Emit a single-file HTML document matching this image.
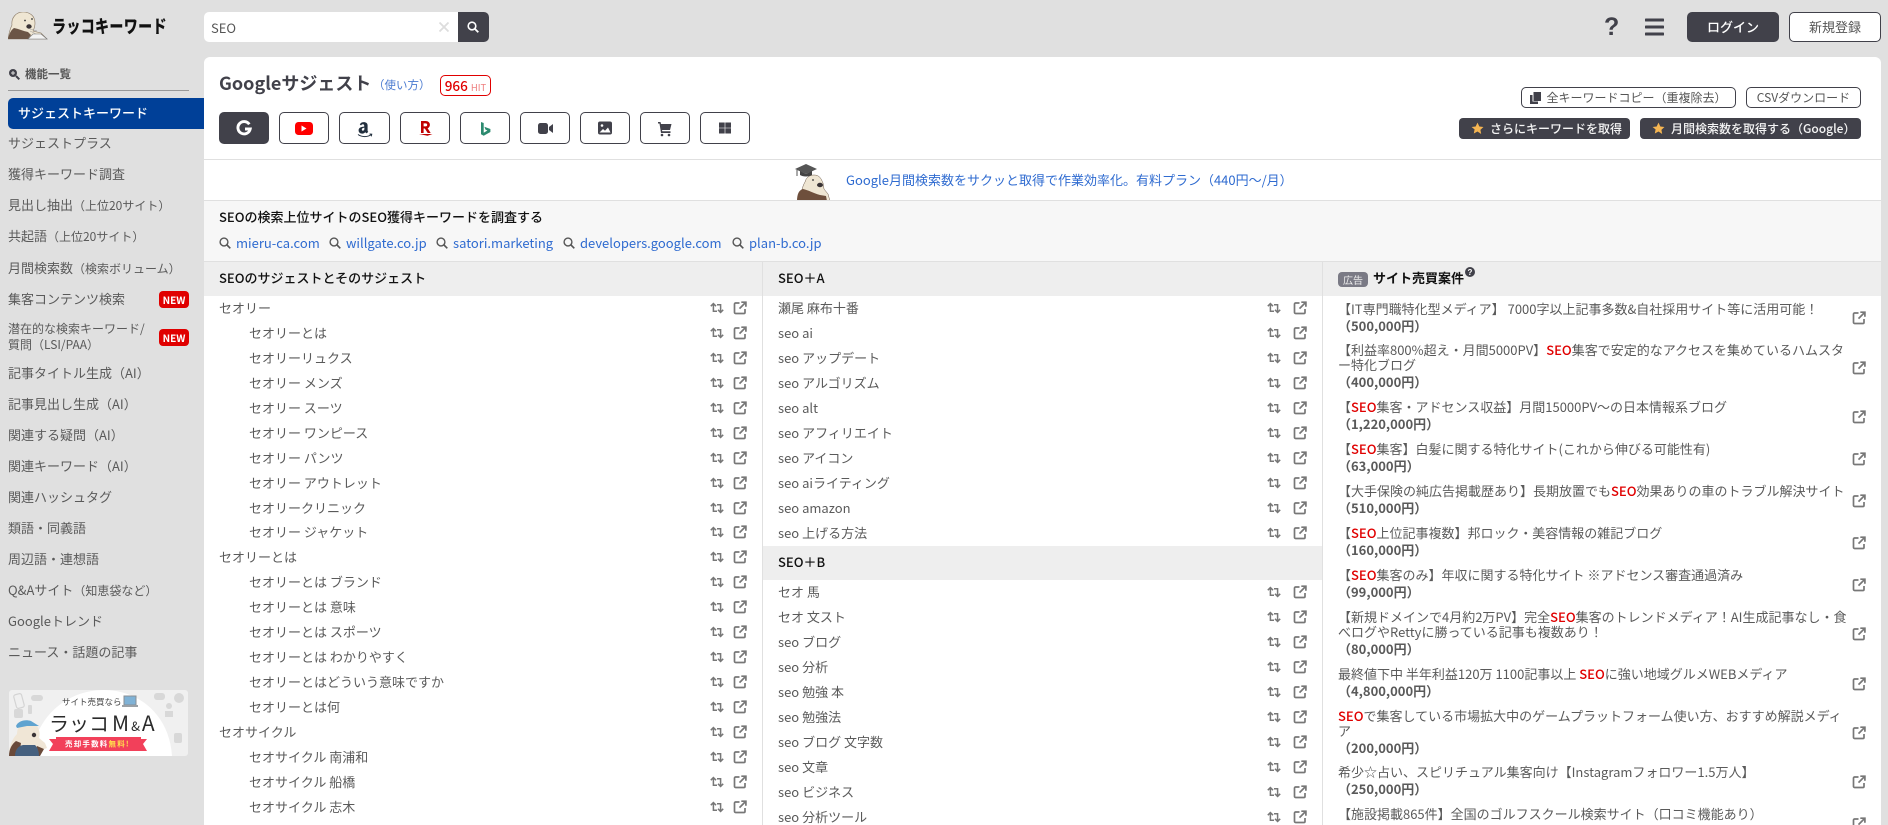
<!DOCTYPE html>
<html lang="ja"><head><meta charset="utf-8"><title>ラッコキーワード</title>
<style>
*{box-sizing:border-box}
html,body{margin:0;padding:0;width:1888px;height:825px;overflow:hidden;background:#e0e0e0}
body{position:relative;font-family:"Noto Sans CJK JP","Liberation Sans",sans-serif;font-size:13px;color:#555}
.a{position:absolute;white-space:nowrap}
.logo{left:52px;top:12px;font-size:18px;font-weight:900;color:#111;line-height:28px;transform:scaleX(.78);transform-origin:0 50%;letter-spacing:.4px}
.search{left:204px;top:12px;width:285px;height:30px;background:#fff;border-radius:5px;overflow:hidden}
.search span{position:absolute;left:7px;top:0;line-height:31px;color:#555}
.search i{position:absolute;left:254px;top:0;width:31px;height:30px;background:#41414a}
.side{left:8px;height:30px;line-height:30px;color:#5a5a5a}
.side small{font-size:12px}
.act{left:8px;top:98px;width:196px;height:31px;background:#004098;color:#fff;border-radius:5px 0 0 5px;line-height:29px;padding-left:10px;font-weight:500}
.new{left:159px;width:30px;height:17px;background:#e00000;color:#fff;border-radius:4px;font-size:10px;font-weight:700;line-height:17px;text-align:center}
.card{left:204px;top:57px;width:1677px;height:790px;background:#fff;border-radius:6px 6px 0 0}
.tb{top:112px;width:50px;height:32px;border:1px solid #41414a;border-radius:5px;background:#fff}
.tb svg{position:absolute;left:0;top:0}
.btn{height:21px;border:1px solid #41414a;border-radius:5px;background:#fff;font-size:12px;line-height:19px;text-align:center;color:#555}
.dk{height:21px;background:#41414a;border-radius:4px;color:#f5f5f5;font-size:12px;line-height:21px;font-weight:500}
.ln{height:1px;background:#e0e0e0}
.lnk{top:232px;line-height:21px;color:#2f6bd0}
.si{top:237px}
.hd{height:34px;background:#eee;line-height:32px;color:#111;font-weight:500;padding-left:15px}
.col{top:262px}
.row{position:relative;height:25px;line-height:24px;padding-left:15px;color:#5a5a5a;white-space:nowrap}
.c1 .row{height:24.950px}
.row.n{padding-left:45px}
.row svg{position:absolute;top:5px}
.c1 .p{left:506px}.c1 .q{left:529px}
.c2 .p{left:504px}.c2 .q{left:530px}
.ad{position:relative;padding-left:15px;height:31.900px;margin-bottom:10px;line-height:15px;white-space:nowrap;color:#5a5a5a}
.ad.t{height:46.900px}
.ad b{font-weight:500;color:#e00000}
.ad p{margin:2px 0 0;font-weight:700;color:#5a5a5a}
.ad svg{position:absolute;left:529px;top:50%;margin-top:-5px}
.ic{display:none}
</style></head><body>
<svg class="ic" width="0" height="0"><symbol id="r" viewBox="0 0 14 14"><path d="M.8 5.200 3.400 2.600 6 5.200M3.400 3v7.300H7M13.200 8.800l-2.600 2.600L8 8.800M10.600 11V3.700H7" fill="none" stroke="#777" stroke-width="1.500"/></symbol><symbol id="e" viewBox="0 0 14 14"><path d="M6.500 2H2.600A1.100 1.100 0 0 0 1.500 3.100v8.300a1.100 1.100 0 0 0 1.100 1.100h8.300a1.100 1.100 0 0 0 1.100-1.100V8M8.300 1.200h4.600v4.600M12.700 1.400 6.500 7.600" fill="none" stroke="#777" stroke-width="1.700"/></symbol><symbol id="s" viewBox="0 0 12 12"><circle cx="5" cy="5" r="3.900" fill="none" stroke="#555" stroke-width="1.400"/><path d="m8 8 3.300 3.300" stroke="#555" stroke-width="1.600"/></symbol><symbol id="st" viewBox="0 0 12 12"><path d="M6 .6l1.700 3.500 3.800.5-2.800 2.700.7 3.800L6 8.800l-3.400 1.800.7-3.800L.5 4.600l3.800-.5z" fill="#f5b552"/></symbol></svg>

<!-- top bar -->
<svg class="a" style="left:8px;top:12px" width="40" height="28" viewBox="0 0 40 28"><path d="M0 27C1 21 2 17 4 13 3 6 8 0 15 0c7 0 12 4 12 11 0 3-1 6-2 8l8 2 6 6z" fill="#efe6d3" stroke="#8a7a66" stroke-width=".6"/><path d="M0 27c1-5 3-9 6-11 5 1 9 3 14 4l3 3-3 4z" fill="#6b5546"/><path d="M20 27l5-5 8 0 6 5z" fill="#f3f3f3" stroke="#777" stroke-width=".6"/><path d="M22 17l7 2M22 19l6 3" stroke="#999" stroke-width=".5"/><ellipse cx="21" cy="14.500" rx="2.700" ry="2.200" fill="#3a3436"/><circle cx="17" cy="8.500" r=".9" fill="#333"/><circle cx="24" cy="7" r=".9" fill="#333"/></svg>
<div class="a logo">ラッコキーワード</div>
<div class="a search"><span>SEO</span><svg style="position:absolute;left:235px;top:10px" width="10" height="10" viewBox="0 0 10 10"><path d="M.5.500l9 9M9.500.500l-9 9" stroke="#ddd" stroke-width="1.800"/></svg><i></i><svg style="position:absolute;left:263px;top:9px" width="12" height="12" viewBox="0 0 12 12"><circle cx="5" cy="5" r="3.800" fill="none" stroke="#fff" stroke-width="1.600"/><path d="m8 8 3.300 3.300" stroke="#fff" stroke-width="1.800"/></svg></div>
<div class="a" style="left:1604px;top:10px;font-size:25px;line-height:34px;font-weight:700;color:#41414a;font-family:'Liberation Sans',sans-serif">?</div>
<svg class="a" style="left:1645px;top:18px" width="19" height="18" viewBox="0 0 19 18"><path d="M1 2h17M1 9h17M1 16h17" stroke="#41414a" stroke-width="3" stroke-linecap="round"/></svg>
<div class="a" style="left:1687px;top:12px;width:92px;height:30px;background:#41414a;border-radius:5px;color:#fff;text-align:center;line-height:30px;font-weight:500">ログイン</div>
<div class="a" style="left:1789px;top:12px;width:92px;height:30px;background:#fff;border:1px solid #41414a;border-radius:5px;color:#555;text-align:center;line-height:28px">新規登録</div>

<!-- sidebar -->
<svg class="a" style="left:8px;top:68px" width="12" height="12" viewBox="0 0 12 12"><circle cx="5" cy="5" r="4" fill="#41414a"/><path d="m8 8 3.300 3.300" stroke="#41414a" stroke-width="2"/><path d="M3 5h4M5 3v4" stroke="#e0e0e0" stroke-width="1"/></svg>
<div class="a" style="left:25px;top:60px;font-size:11.500px;line-height:29px;font-weight:700;color:#555">機能一覧</div>
<div class="a" style="left:8px;top:90px;width:181px;height:1px;background:#999"></div>
<div class="a act">サジェストキーワード</div>
<div class="a side" style="top:128px">サジェストプラス</div>
<div class="a side" style="top:159px">獲得キーワード調査</div>
<div class="a side" style="top:190px">見出し抽出<small>（上位20サイト）</small></div>
<div class="a side" style="top:221px">共起語<small>（上位20サイト）</small></div>
<div class="a side" style="top:253px">月間検索数<small>（検索ボリューム）</small></div>
<div class="a side" style="top:284px">集客コンテンツ検索</div>
<div class="a new" style="top:291px">NEW</div>
<div class="a side" style="top:321px;height:32px;line-height:16px;font-size:12px">潜在的な検索キーワード/<br>質問（LSI/PAA）</div>
<div class="a new" style="top:329px">NEW</div>
<div class="a side" style="top:358px">記事タイトル生成（AI）</div>
<div class="a side" style="top:389px">記事見出し生成（AI）</div>
<div class="a side" style="top:420px">関連する疑問（AI）</div>
<div class="a side" style="top:451px">関連キーワード（AI）</div>
<div class="a side" style="top:482px">関連ハッシュタグ</div>
<div class="a side" style="top:513px">類語・同義語</div>
<div class="a side" style="top:544px">周辺語・連想語</div>
<div class="a side" style="top:575px">Q&amp;Aサイト<small>（知恵袋など）</small></div>
<div class="a side" style="top:606px">Googleトレンド</div>
<div class="a side" style="top:637px">ニュース・話題の記事</div>

<!-- banner -->
<svg class="a" style="left:9px;top:690px" width="179" height="66" viewBox="0 0 179 66">
<rect width="179" height="66" rx="3" fill="#f0f0f0"/>
<path d="M22 66C28 24 60 0 95 0c32 0 65 22 68 66z" fill="#fff"/>
<g fill="#d8d8d8"><rect x="6" y="4" width="8" height="14" rx="2" transform="rotate(-15 10 11)" fill="none" stroke="#d4d4d4" stroke-width="1.200"/><rect x="22" y="5" width="12" height="6" rx="3"/><rect x="19" y="15" width="4" height="9" rx="1"/><rect x="5" y="19" width="9" height="9" rx="2"/><rect x="145" y="3" width="11" height="7" rx="3"/><circle cx="170" cy="8" r="5"/><circle cx="160" cy="16" r="3"/><rect x="156" y="21" width="8" height="6"/><rect x="165" y="43" width="8" height="10" rx="2"/></g>
<text x="53" y="15" font-family="Noto Sans CJK JP,sans-serif" font-size="8.500" fill="#444">サイト売買なら</text>
<rect x="115" y="6" width="12" height="9" fill="#7fb2d6" stroke="#8a8f94"/><rect x="113" y="15" width="16" height="2" fill="#9aa0a5"/>
<text x="40" y="41" font-family="Noto Sans CJK JP,sans-serif" font-size="20" fill="#2a2a2a">ラッコ<tspan font-size="21" dx="3">M</tspan><tspan font-size="13" dx="2">&amp;</tspan><tspan font-size="21" dx="2">A</tspan></text>
<path d="M40 49h98l-4 5 4 7H40l4-7z" fill="#f2405a"/><rect x="47" y="47" width="85" height="12" fill="#f2405a"/>
<text x="56" y="56.500" font-family="Noto Sans CJK JP,sans-serif" font-size="7.500" font-weight="700" fill="#fff" letter-spacing="1.200">売却手数料<tspan fill="#ffe14d">無料!</tspan></text>
<path d="M0 62c1-8 4-14 8-18 0-3 1-7 4-10 5-1 11-1 16 2 3 5 3 8 2 12l6 5 2 5-8 3H0z" fill="#f0e6d6"/><path d="M7 36C9 31 16 29 22 31l8 5-12 0-10 2z" fill="#5fa3d0"/><path d="M0 66c0-7 3-12 7-15l5 2-2 13zM28 56l7 3-4 7h-6z" fill="#6a4a3a"/><path d="M6 66c0-6 3-10 8-11h12c3 3 4 7 4 11z" fill="#45607f"/><circle cx="25" cy="45" r="2.200" fill="#3a3436"/>
</svg>

<!-- card -->
<div class="a card"></div>
<div class="a" style="left:219px;top:68px;font-size:18px;font-weight:700;line-height:30px;color:#41414a">Googleサジェスト</div>
<div class="a" style="left:373px;top:73px;font-size:11.500px;line-height:24px;color:#4a7ad0">（使い方）</div>
<div class="a" style="left:440px;top:75px;width:51px;height:21px;border:1px solid #e00000;border-radius:5px;background:#fff;text-align:center;line-height:18px;color:#e00000;font-weight:500;font-size:13.500px">966 <span style="font-size:9.500px;font-weight:400;color:#ee8080">HIT</span></div>

<div class="a tb" style="left:219px;background:#41414a"><svg width="48" height="30" viewBox="0 0 48 30"><path d="M29.300 11.300A6.200 6.200 0 1 0 30.200 16H25" fill="none" stroke="#fff" stroke-width="2.900"/></svg></div>
<div class="a tb" style="left:279px"><svg width="48" height="30" viewBox="0 0 48 30"><rect x="15" y="9" width="18" height="13" rx="3.500" fill="#f00"/><path d="M21.500 12.500v6l5-3z" fill="#fff"/></svg></div>
<div class="a tb" style="left:339px;width:51px"><svg width="49" height="30" viewBox="0 0 49 30"><path d="M19.800 11.500c.8-1.700 2.300-2.400 4-2.400 2.200 0 3.800 1.100 3.800 3.300v5c0 .8.300 1.100.7 1.500l-1.800 1.500-1.200-1.200c-1.100 1-2.100 1.400-3.300 1.400-1.900 0-3.400-1.200-3.400-3.200 0-2.800 2.800-3.600 5.600-3.800v-.9c0-1-.5-1.400-1.400-1.400-.8 0-1.400.5-1.700 1.200zM24.400 14.600c-1.500.2-2.600.7-2.600 1.900 0 .8.400 1.200 1.100 1.200 1 0 1.500-.9 1.500-1.900z" fill="#222f3e"/><path d="M18 21.500c4 2.800 9.500 2.800 13.500 0" fill="none" stroke="#222f3e" stroke-width="1"/><path d="M29.500 21l2.300.2-.5 2.200" fill="none" stroke="#222f3e" stroke-width=".9"/></svg></div>
<div class="a tb" style="left:400px"><svg width="48" height="30" viewBox="0 0 48 30"><path d="M20 8v12h2.600v-4.500h1.200l2.900 4.500h3l-3.100-4.800c1.500-.5 2.300-1.800 2.300-3.400C28.900 9.600 27.200 8 24.600 8zm2.600 2.400h2c1 0 1.600.6 1.600 1.500 0 .9-.6 1.500-1.600 1.500h-2z" fill="#bf0000"/><path d="M18 21h13.500l-5 1.700z" fill="#bf0000"/></svg></div>
<div class="a tb" style="left:460px"><svg width="48" height="30" viewBox="0 0 48 30"><path d="M20 9l2.700 1v9.700l3.700-2.200-1.900-.9-1.100-2.800 6 2.200v3l-6.700 3.700-2.700-1.500z" fill="#2c8a6f"/></svg></div>
<div class="a tb" style="left:520px"><svg width="48" height="30" viewBox="0 0 48 30"><rect x="17" y="10" width="10" height="11" rx="2.500" fill="#41414a"/><path d="M28 14l4-3v9l-4-3z" fill="#41414a"/></svg></div>
<div class="a tb" style="left:580px"><svg width="48" height="30" viewBox="0 0 48 30"><rect x="17" y="8.500" width="14" height="13" rx="2" fill="#41414a"/><circle cx="21" cy="12.500" r="1.300" fill="#fff"/><path d="M18.500 19.500l3.500-3.500 2 1.800 3-3.300 2.500 5z" fill="#fff"/></svg></div>
<div class="a tb" style="left:640px"><svg width="48" height="30" viewBox="0 0 48 30"><path d="M17 9h2.500l.5 2h10.500L29 17h-8l.3 1.300H29.500V20H20L18.500 10.500H17z" fill="#41414a"/><circle cx="21" cy="22" r="1.300" fill="#41414a"/><circle cx="28" cy="22" r="1.300" fill="#41414a"/></svg></div>
<div class="a tb" style="left:700px"><svg width="48" height="30" viewBox="0 0 48 30"><path d="M18 9.500h5.700v5.200H18zM24.300 9.500H30v5.200h-5.700zM18 15.300h5.700v5.200H18zM24.300 15.300H30v5.200h-5.700z" fill="#41414a"/></svg></div>

<div class="a btn" style="left:1521px;top:87px;width:215px"><svg style="vertical-align:-2px;margin-right:5px" width="11" height="12" viewBox="0 0 11 12"><path d="M3.500 0h7.500v9H3.500z" fill="#41414a"/><path d="M0 3h2.500v6.500h5.500V12H0z" fill="#41414a"/></svg>全キーワードコピー（重複除去）</div>
<div class="a btn" style="left:1746px;top:87px;width:115px">CSVダウンロード</div>
<div class="a dk" style="left:1459px;top:118px;width:171px;padding-left:12px"><svg style="vertical-align:-2px;margin-right:6px" width="13" height="13"><use href="#st"/></svg>さらにキーワードを取得</div>
<div class="a dk" style="left:1640px;top:118px;width:221px;padding-left:12px"><svg style="vertical-align:-2px;margin-right:6px" width="13" height="13"><use href="#st"/></svg>月間検索数を取得する（Google）</div>

<div class="a ln" style="left:204px;top:159px;width:1677px"></div>
<svg class="a" style="left:795px;top:164px" width="38" height="37" viewBox="0 0 38 37"><path d="M6 37c0-8 1-14 4-19 1-4 4-7 9-7s7 3 9 8l1 6 4 5 2 7z" fill="#efe6d3" stroke="#6b5a4b" stroke-width=".5"/><path d="M2 37c0-7 2-11 6-12 5 1 10 4 17 6l6 1 1 5z" fill="#6e4f3c"/><path d="M0 5 11 0l11 5-11 5z" fill="#555"/><path d="M5 7v4c3 2 9 2 12 0V7l-6 3z" fill="#444"/><path d="M2 6v6" stroke="#555"/><ellipse cx="25" cy="21" rx="3" ry="2.200" fill="#3a3436"/><circle cx="18" cy="16" r=".9" fill="#333"/></svg>
<div class="a" style="left:846px;top:168px;line-height:24px;color:#2f6bd0">Google月間検索数をサクッと取得で作業効率化。有料プラン（440円〜/月）</div>
<div class="a ln" style="left:204px;top:200px;width:1677px"></div>
<div class="a" style="left:204px;top:201px;width:1677px;height:60px;background:#f7f7f7"></div>
<div class="a" style="left:219px;top:205px;line-height:24px;font-weight:500;color:#111">SEOの検索上位サイトのSEO獲得キーワードを調査する</div>
<svg class="a si" style="left:219px" width="12" height="12"><use href="#s"/></svg><div class="a lnk" style="left:236px">mieru-ca.com</div>
<svg class="a si" style="left:329px" width="12" height="12"><use href="#s"/></svg><div class="a lnk" style="left:346px">willgate.co.jp</div>
<svg class="a si" style="left:436px" width="12" height="12"><use href="#s"/></svg><div class="a lnk" style="left:453px">satori.marketing</div>
<svg class="a si" style="left:563px" width="12" height="12"><use href="#s"/></svg><div class="a lnk" style="left:580px">developers.google.com</div>
<svg class="a si" style="left:732px" width="12" height="12"><use href="#s"/></svg><div class="a lnk" style="left:749px">plan-b.co.jp</div>
<div class="a ln" style="left:204px;top:261px;width:1677px"></div>

<!-- col1 -->
<div class="a col c1" style="left:204px;width:558px">
<div class="hd">SEOのサジェストとそのサジェスト</div>
<div class="row">セオリー<svg class="p" width="14" height="14"><use href="#r"/></svg><svg class="q" width="14" height="14"><use href="#e"/></svg></div>
<div class="row n">セオリーとは<svg class="p" width="14" height="14"><use href="#r"/></svg><svg class="q" width="14" height="14"><use href="#e"/></svg></div>
<div class="row n">セオリーリュクス<svg class="p" width="14" height="14"><use href="#r"/></svg><svg class="q" width="14" height="14"><use href="#e"/></svg></div>
<div class="row n">セオリー メンズ<svg class="p" width="14" height="14"><use href="#r"/></svg><svg class="q" width="14" height="14"><use href="#e"/></svg></div>
<div class="row n">セオリー スーツ<svg class="p" width="14" height="14"><use href="#r"/></svg><svg class="q" width="14" height="14"><use href="#e"/></svg></div>
<div class="row n">セオリー ワンピース<svg class="p" width="14" height="14"><use href="#r"/></svg><svg class="q" width="14" height="14"><use href="#e"/></svg></div>
<div class="row n">セオリー パンツ<svg class="p" width="14" height="14"><use href="#r"/></svg><svg class="q" width="14" height="14"><use href="#e"/></svg></div>
<div class="row n">セオリー アウトレット<svg class="p" width="14" height="14"><use href="#r"/></svg><svg class="q" width="14" height="14"><use href="#e"/></svg></div>
<div class="row n">セオリークリニック<svg class="p" width="14" height="14"><use href="#r"/></svg><svg class="q" width="14" height="14"><use href="#e"/></svg></div>
<div class="row n">セオリー ジャケット<svg class="p" width="14" height="14"><use href="#r"/></svg><svg class="q" width="14" height="14"><use href="#e"/></svg></div>
<div class="row">セオリーとは<svg class="p" width="14" height="14"><use href="#r"/></svg><svg class="q" width="14" height="14"><use href="#e"/></svg></div>
<div class="row n">セオリーとは ブランド<svg class="p" width="14" height="14"><use href="#r"/></svg><svg class="q" width="14" height="14"><use href="#e"/></svg></div>
<div class="row n">セオリーとは 意味<svg class="p" width="14" height="14"><use href="#r"/></svg><svg class="q" width="14" height="14"><use href="#e"/></svg></div>
<div class="row n">セオリーとは スポーツ<svg class="p" width="14" height="14"><use href="#r"/></svg><svg class="q" width="14" height="14"><use href="#e"/></svg></div>
<div class="row n">セオリーとは わかりやすく<svg class="p" width="14" height="14"><use href="#r"/></svg><svg class="q" width="14" height="14"><use href="#e"/></svg></div>
<div class="row n">セオリーとはどういう意味ですか<svg class="p" width="14" height="14"><use href="#r"/></svg><svg class="q" width="14" height="14"><use href="#e"/></svg></div>
<div class="row n">セオリーとは何<svg class="p" width="14" height="14"><use href="#r"/></svg><svg class="q" width="14" height="14"><use href="#e"/></svg></div>
<div class="row">セオサイクル<svg class="p" width="14" height="14"><use href="#r"/></svg><svg class="q" width="14" height="14"><use href="#e"/></svg></div>
<div class="row n">セオサイクル 南浦和<svg class="p" width="14" height="14"><use href="#r"/></svg><svg class="q" width="14" height="14"><use href="#e"/></svg></div>
<div class="row n">セオサイクル 船橋<svg class="p" width="14" height="14"><use href="#r"/></svg><svg class="q" width="14" height="14"><use href="#e"/></svg></div>
<div class="row n">セオサイクル 志木<svg class="p" width="14" height="14"><use href="#r"/></svg><svg class="q" width="14" height="14"><use href="#e"/></svg></div>
</div>
<div class="a" style="left:762px;top:262px;width:1px;height:563px;background:#e0e0e0;z-index:2"></div>

<!-- col2 -->
<div class="a col c2" style="left:763px;width:559px">
<div class="hd">SEO＋A</div>
<div class="row">瀬尾 麻布十番<svg class="p" width="14" height="14"><use href="#r"/></svg><svg class="q" width="14" height="14"><use href="#e"/></svg></div>
<div class="row">seo ai<svg class="p" width="14" height="14"><use href="#r"/></svg><svg class="q" width="14" height="14"><use href="#e"/></svg></div>
<div class="row">seo アップデート<svg class="p" width="14" height="14"><use href="#r"/></svg><svg class="q" width="14" height="14"><use href="#e"/></svg></div>
<div class="row">seo アルゴリズム<svg class="p" width="14" height="14"><use href="#r"/></svg><svg class="q" width="14" height="14"><use href="#e"/></svg></div>
<div class="row">seo alt<svg class="p" width="14" height="14"><use href="#r"/></svg><svg class="q" width="14" height="14"><use href="#e"/></svg></div>
<div class="row">seo アフィリエイト<svg class="p" width="14" height="14"><use href="#r"/></svg><svg class="q" width="14" height="14"><use href="#e"/></svg></div>
<div class="row">seo アイコン<svg class="p" width="14" height="14"><use href="#r"/></svg><svg class="q" width="14" height="14"><use href="#e"/></svg></div>
<div class="row">seo aiライティング<svg class="p" width="14" height="14"><use href="#r"/></svg><svg class="q" width="14" height="14"><use href="#e"/></svg></div>
<div class="row">seo amazon<svg class="p" width="14" height="14"><use href="#r"/></svg><svg class="q" width="14" height="14"><use href="#e"/></svg></div>
<div class="row">seo 上げる方法<svg class="p" width="14" height="14"><use href="#r"/></svg><svg class="q" width="14" height="14"><use href="#e"/></svg></div>
<div class="hd">SEO＋B</div>
<div class="row">セオ 馬<svg class="p" width="14" height="14"><use href="#r"/></svg><svg class="q" width="14" height="14"><use href="#e"/></svg></div>
<div class="row">セオ 文スト<svg class="p" width="14" height="14"><use href="#r"/></svg><svg class="q" width="14" height="14"><use href="#e"/></svg></div>
<div class="row">seo ブログ<svg class="p" width="14" height="14"><use href="#r"/></svg><svg class="q" width="14" height="14"><use href="#e"/></svg></div>
<div class="row">seo 分析<svg class="p" width="14" height="14"><use href="#r"/></svg><svg class="q" width="14" height="14"><use href="#e"/></svg></div>
<div class="row">seo 勉強 本<svg class="p" width="14" height="14"><use href="#r"/></svg><svg class="q" width="14" height="14"><use href="#e"/></svg></div>
<div class="row">seo 勉強法<svg class="p" width="14" height="14"><use href="#r"/></svg><svg class="q" width="14" height="14"><use href="#e"/></svg></div>
<div class="row">seo ブログ 文字数<svg class="p" width="14" height="14"><use href="#r"/></svg><svg class="q" width="14" height="14"><use href="#e"/></svg></div>
<div class="row">seo 文章<svg class="p" width="14" height="14"><use href="#r"/></svg><svg class="q" width="14" height="14"><use href="#e"/></svg></div>
<div class="row">seo ビジネス<svg class="p" width="14" height="14"><use href="#r"/></svg><svg class="q" width="14" height="14"><use href="#e"/></svg></div>
<div class="row">seo 分析ツール<svg class="p" width="14" height="14"><use href="#r"/></svg><svg class="q" width="14" height="14"><use href="#e"/></svg></div>
</div>
<div class="a" style="left:1322px;top:262px;width:1px;height:563px;background:#e0e0e0;z-index:2"></div>

<!-- col3 -->
<div class="a col" style="left:1323px;width:558px">
<div class="hd" style="padding-left:50px;font-weight:700">サイト売買案件</div>
<div style="height:4.500px"></div>
<div class="ad">【IT専門職特化型メディア】 7000字以上記事多数&amp;自社採用サイト等に活用可能！<p>（500,000円）</p><svg width="14" height="14"><use href="#e"/></svg></div>
<div class="ad t">【利益率800%超え・月間5000PV】<b>SEO</b>集客で安定的なアクセスを集めているハムスタ<br>ー特化ブログ<p>（400,000円）</p><svg width="14" height="14"><use href="#e"/></svg></div>
<div class="ad">【<b>SEO</b>集客・アドセンス収益】月間15000PV～の日本情報系ブログ<p>（1,220,000円）</p><svg width="14" height="14"><use href="#e"/></svg></div>
<div class="ad">【<b>SEO</b>集客】白髪に関する特化サイト(これから伸びる可能性有)<p>（63,000円）</p><svg width="14" height="14"><use href="#e"/></svg></div>
<div class="ad">【大手保険の純広告掲載歴あり】長期放置でも<b>SEO</b>効果ありの車のトラブル解決サイト<p>（510,000円）</p><svg width="14" height="14"><use href="#e"/></svg></div>
<div class="ad">【<b>SEO</b>上位記事複数】邦ロック・美容情報の雑記ブログ<p>（160,000円）</p><svg width="14" height="14"><use href="#e"/></svg></div>
<div class="ad">【<b>SEO</b>集客のみ】年収に関する特化サイト ※アドセンス審査通過済み<p>（99,000円）</p><svg width="14" height="14"><use href="#e"/></svg></div>
<div class="ad t">【新規ドメインで4月約2万PV】完全<b>SEO</b>集客のトレンドメディア！AI生成記事なし・食<br>べログやRettyに勝っている記事も複数あり！<p>（80,000円）</p><svg width="14" height="14"><use href="#e"/></svg></div>
<div class="ad">最終値下中 半年利益120万 1100記事以上 <b>SEO</b>に強い地域グルメWEBメディア<p>（4,800,000円）</p><svg width="14" height="14"><use href="#e"/></svg></div>
<div class="ad t"><b>SEO</b>で集客している市場拡大中のゲームプラットフォーム使い方、おすすめ解説メディ<br>ア<p>（200,000円）</p><svg width="14" height="14"><use href="#e"/></svg></div>
<div class="ad">希少☆占い、スピリチュアル集客向け【Instagramフォロワー1.5万人】<p>（250,000円）</p><svg width="14" height="14"><use href="#e"/></svg></div>
<div class="ad">【施設掲載865件】全国のゴルフスクール検索サイト（口コミ機能あり）<p>（300,000円）</p><svg width="14" height="14"><use href="#e"/></svg></div>
</div>
<div class="a" style="left:1338px;top:272px;width:30px;height:15px;background:#7a7a85;border-radius:4px;color:#eee;font-size:10px;line-height:15px;text-align:center">広告</div>
<svg class="a" style="left:1465px;top:267px" width="10" height="10" viewBox="0 0 10 10"><circle cx="5" cy="5" r="5" fill="#41414a"/><text x="5" y="8" text-anchor="middle" font-size="8" font-weight="700" fill="#fff" font-family="Liberation Sans,sans-serif">?</text></svg>
</body></html>
